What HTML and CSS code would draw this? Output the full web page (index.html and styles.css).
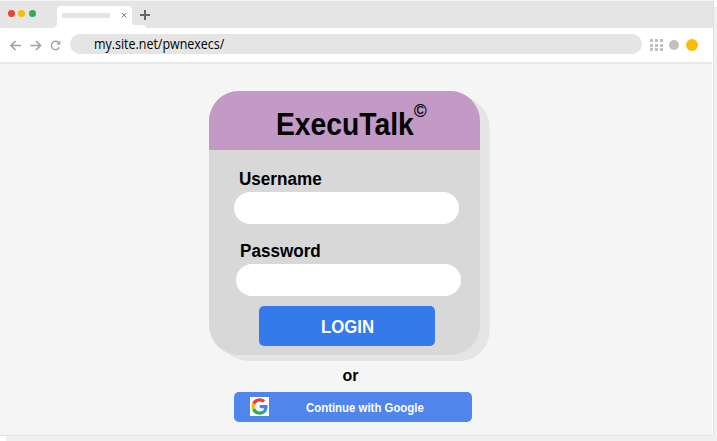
FILE: index.html
```html
<!DOCTYPE html>
<html lang="en">
<head>
<meta charset="utf-8">
<title>ExecuTalk</title>
<link rel="stylesheet" href="styles.css">
</head>
<body>
<div class="window">
  <header class="tabs">
    <div class="lights"><i class="red"></i><i class="yellow"></i><i class="green"></i></div>
    <svg class="tab" width="96" height="22" viewBox="0 0 96 22">
      <path d="M0 22 Q4 21 4 17 V4 Q4 0 8 0 H75 Q79 0 79 4 V16 Q79 19 82 19 H90 Q92 19 94 22Z" fill="#fff"/>
      <path d="M9 7H57V12H9Z" fill="#e5e5e5"/>
      <path d="M69 7l4.400 4.400M73.400 7l-4.400 4.400" stroke="#777" stroke-width="1"/>
    </svg>
    <svg class="plus" width="10" height="10" viewBox="0 0 10 10"><path d="M5 0V10M0 5H10" stroke="#666" stroke-width="2"/></svg>
  </header>
  <nav class="toolbar">
    <svg class="nav-icons" width="54" height="14" viewBox="0 0 54 14" fill="none" stroke="#a2a2a2" stroke-width="1.700">
      <path d="M12 7.500H2M6.500 3L2 7.500L6.500 12M21.500 7.500H31.500M27 3L31.500 7.500L27 12"/>
      <path d="M50.300 9.400A4.200 4.200 0 1 1 49.500 4.500" stroke-width="1.400"/>
      <path d="M51.300 2.400V6.500H47.200Z" fill="#a2a2a2" stroke="none"/>
    </svg>
    <div class="address"><span class="url">my.site.net/pwnexecs/</span></div>
    <div class="apps"><i></i><i></i><i></i><i></i><i></i><i></i><i></i><i></i><i></i></div>
    <i class="ext"></i>
    <i class="avatar"></i>
  </nav>
  <main class="page">
    <section class="card">
      <h1 class="brand"><span class="name">ExecuTalk</span><span class="mark">©</span></h1>
      <form class="form">
        <label class="label" for="user"><span>Username</span></label>
        <input class="field" id="user" type="text">
        <label class="label second" for="pass"><span>Password</span></label>
        <input class="field second" id="pass" type="password">
        <button class="login" type="button"><span>LOGIN</span></button>
      </form>
    </section>
    <p class="or">or</p>
    <button class="google" type="button">
      <svg width="19" height="19" viewBox="0 0 19 19">
        <path fill="#fff" d="M0 0H19V19H0Z"/>
        <g transform="translate(1.400 1.200) scale(.345)">
          <path fill="#ea4335" d="M24 9.500c3.540 0 6.710 1.220 9.210 3.600l6.850-6.850C35.900 2.380 30.470 0 24 0 14.620 0 6.510 5.380 2.560 13.220l7.980 6.190C12.430 13.720 17.740 9.500 24 9.500z"/>
          <path fill="#4285f4" d="M46.980 24.550c0-1.570-.15-3.090-.38-4.550H24v9.020h12.940c-.58 2.960-2.260 5.480-4.780 7.180l7.730 6c4.510-4.180 7.090-10.360 7.090-17.650z"/>
          <path fill="#fbbc05" d="M10.530 28.590c-.48-1.450-.76-2.990-.76-4.590s.27-3.140.76-4.590l-7.980-6.190C.92 16.460 0 20.120 0 24s.92 7.540 2.560 10.780l7.970-6.190z"/>
          <path fill="#34a853" d="M24 48c6.480 0 11.930-2.130 15.890-5.810l-7.730-6c-2.150 1.450-4.920 2.300-8.160 2.300-6.260 0-11.570-4.220-13.470-9.910l-7.980 6.190C6.510 42.620 14.620 48 24 48z"/>
        </g>
      </svg>
      <span>Continue with Google</span>
    </button>
  </main>
</div>
</body>
</html>
```

FILE: styles.css
```css
* { box-sizing: border-box; }

body {
  margin: 0;
  width: 717px;
  height: 441px;
  overflow: hidden;
  background: linear-gradient(#f0f0f0, #f0f0f0) 6px 7px no-repeat #fff;
  font-family: "Liberation Sans", Arial, sans-serif;
  color: #000;
}

i { display: block; }

.window {
  width: 714px;
  height: 436px;
  border: solid #e0e0e0;
  border-width: 0 1px 1px 0;
  border-radius: 0 2px 2px 0;
  background: #fff;
  overflow: hidden;
}

.tabs {
  height: 28px;
  display: flex;
  align-items: flex-start;
  background: #e5e5e5;
  border-top: 1px solid #f5f5f5;
}

.lights { display: flex; gap: 3.6px; padding: 9px 0 0 7.5px; width: 53px; }
.lights i { width: 7px; height: 7px; border-radius: 50%; }
.red { background: #ea4335; }
.yellow { background: #fbbc05; }
.green { background: #34a853; }
.tab { margin-top: 5px; flex: none; }
.plus { margin: 9px 0 0 -9px; }

.toolbar { height: 34px; display: flex; align-items: center; padding-left: 9px; }
.nav-icons { margin-right: 7px; flex: none; }
.address {
  width: 572px;
  height: 20px;
  margin-top: -2px;
  padding-left: 24px;
  border-radius: 10px;
  background: #e5e5e5;
}
.url {
  display: inline-block;
  font: 14.5px/20px "Open Sans", sans-serif;
  transform: scaleX(.858);
  transform-origin: left;
  color: #000;
}
.apps { display: grid; grid-template-columns: repeat(3, 3px); gap: 1.8px; margin-left: 8px; }
.apps i { width: 3px; height: 3px; background: #c2c2c2; }
.ext { width: 10px; height: 10px; margin-left: 6.5px; border-radius: 50%; background: #c1c1c1; }
.avatar { width: 12px; height: 12px; margin-left: 6.5px; border-radius: 50%; background: #fbbc05; }

.page {
  height: 373px;
  border-top: 2px solid #e8e8e8;
  border-right: 1px solid #fff;
  background: #f5f5f5;
  padding: 27px 0 0 209px;
}

.card {
  width: 271px;
  height: 264px;
  border-radius: 30px;
  background: #d8d8d8;
  box-shadow: 9.5px 6px 0 #e5e5e5;
}

.brand {
  height: 59px;
  margin: 0;
  padding: 16px 0 0 67px;
  display: flex;
  align-items: flex-start;
  border-radius: 30px 30px 0 0;
  background: #c399c5;
}
.name { width: 138px; font-size: 31px; line-height: 36px; transform: scaleX(.912); transform-origin: left; }
.mark { margin-top: -6px; font-size: 18px; line-height: 20px; font-weight: 400; transform: scaleX(.95); transform-origin: left; -webkit-text-stroke: .2px #000; }

.form { display: flex; flex-direction: column; align-items: flex-start; padding: 19px 0 0 25px; }
.label { height: 23px; padding-left: 5px; font-weight: 700; font-size: 18px; line-height: 21px; }
.label span { display: inline-block; transform: scaleX(.95); transform-origin: left; }
.label.second { margin-top: 17px; padding-left: 6px; }
.field {
  width: 224.5px;
  height: 32px;
  padding: 0 16px;
  border: 0;
  border-radius: 16px;
  background: #fff;
}
.field.second { margin-left: 2px; }
.login {
  width: 176px;
  height: 40px;
  margin: 9.500px 0 0 25px;
  padding: 1px 0 0;
  border: 0;
  border-radius: 5px;
  background: #347aeb;
  color: #fff;
  font: 700 18px/40px "Liberation Sans", Arial, sans-serif;
}
.login span { display: inline-block; transform: scaleX(.93); }

.or { width: 19px; height: 20px; margin: 11px 0 0 133.5px; font-weight: 700; font-size: 16px; line-height: 20px; }

.google {
  width: 238.5px;
  height: 30px;
  margin: 5.5px 0 0 24.5px;
  padding: 0 0 0 16px;
  display: flex;
  align-items: center;
  border: 0;
  border-radius: 5px;
  background: #5085eb;
  color: #fff;
  font: 700 12px/30px "Liberation Sans", Arial, sans-serif;
}
.google svg { margin-top: -1px; }
.google span { margin: 2px 0 0 37px; white-space: nowrap; transform: scaleX(.95); transform-origin: left; }
```
